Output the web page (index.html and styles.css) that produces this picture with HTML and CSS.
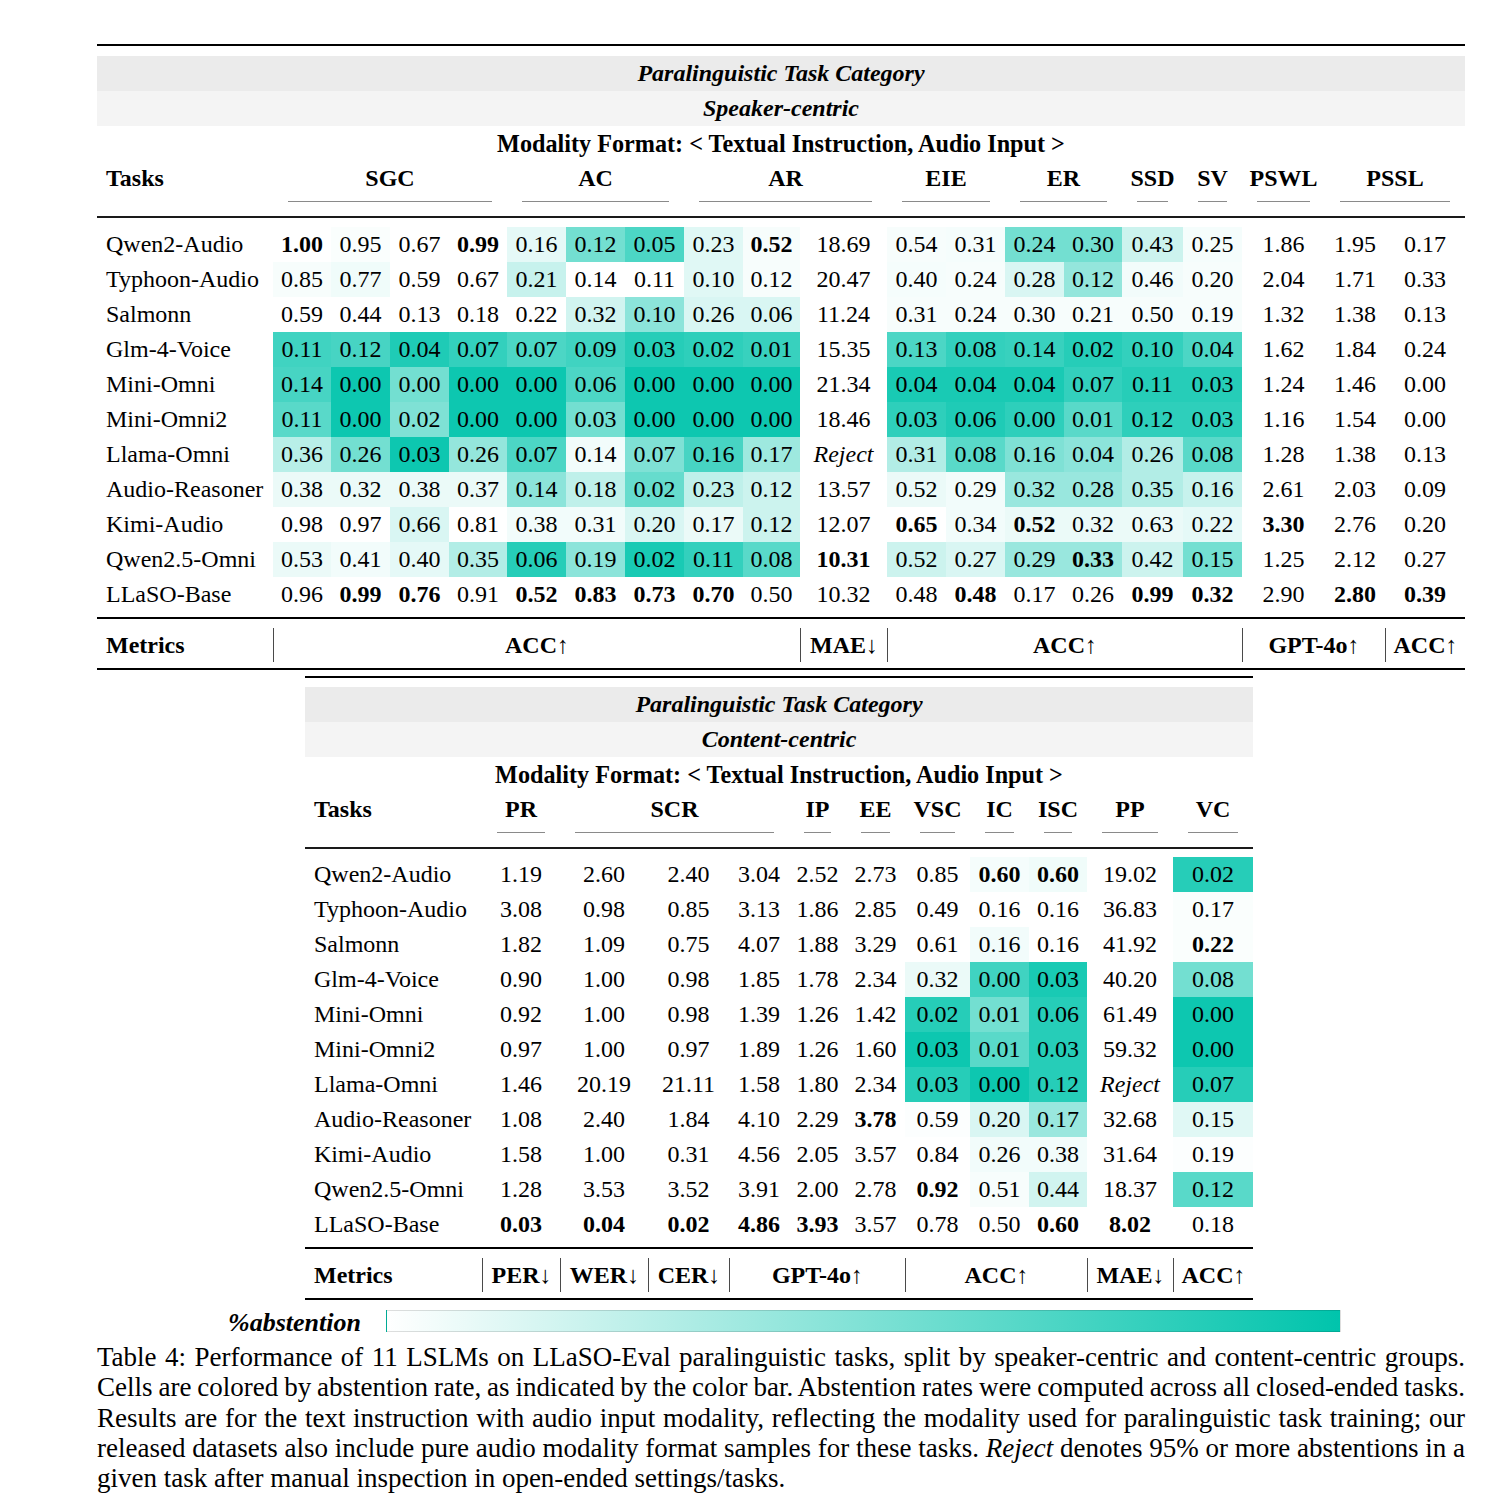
FILE: index.html
```html
<!DOCTYPE html>
<html lang="en">
<head>
<meta charset="utf-8">
<title>Table 4: Paralinguistic tasks</title>
<link rel="stylesheet" href="styles.css">
</head>
<body>
<main class="page">

<section class="tbl t1">
  <div class="band cat">Paralinguistic Task Category</div>
  <div class="band sub">Speaker-centric</div>
  <div class="modality">Modality Format: &lt; Textual Instruction, Audio Input &gt;</div>
  <div class="hdr g1">
    <div class="th">Tasks</div>
    <div class="th grp s4">SGC</div>
    <div class="th grp s3">AC</div>
    <div class="th grp s3">AR</div>
    <div class="th grp s2">EIE</div>
    <div class="th grp s2">ER</div>
    <div class="th grp">SSD</div>
    <div class="th grp">SV</div>
    <div class="th grp">PSWL</div>
    <div class="th grp s2">PSSL</div>
  </div>
  <div class="body">
    <div class="row g1"><span>Qwen2-Audio</span><span class="b">1.00</span><span class="c" style="--p:.02">0.95</span><span>0.67</span><span class="b">0.99</span><span class="c" style="--p:.1">0.16</span><span class="c" style="--p:.55">0.12</span><span class="c" style="--p:.7">0.05</span><span class="c" style="--p:.12">0.23</span><span class="b c" style="--p:.03">0.52</span><span>18.69</span><span class="c" style="--p:.03">0.54</span><span class="c" style="--p:.04">0.31</span><span class="c" style="--p:.55">0.24</span><span class="c" style="--p:.55">0.30</span><span class="c" style="--p:.2">0.43</span><span class="c" style="--p:.04">0.25</span><span>1.86</span><span>1.95</span><span>0.17</span></div>
    <div class="row g1"><span>Typhoon-Audio</span><span class="c" style="--p:.03">0.85</span><span class="c" style="--p:.06">0.77</span><span>0.59</span><span>0.67</span><span class="c" style="--p:.22">0.21</span><span>0.14</span><span>0.11</span><span class="c" style="--p:.12">0.10</span><span class="c" style="--p:.03">0.12</span><span>20.47</span><span class="c" style="--p:.04">0.40</span><span class="c" style="--p:.03">0.24</span><span class="c" style="--p:.15">0.28</span><span class="c" style="--p:.42">0.12</span><span class="c" style="--p:.05">0.46</span><span class="c" style="--p:.03">0.20</span><span>2.04</span><span>1.71</span><span>0.33</span></div>
    <div class="row g1"><span>Salmonn</span><span>0.59</span><span>0.44</span><span>0.13</span><span>0.18</span><span>0.22</span><span class="c" style="--p:.18">0.32</span><span class="c" style="--p:.45">0.10</span><span class="c" style="--p:.15">0.26</span><span class="c" style="--p:.15">0.06</span><span>11.24</span><span class="c" style="--p:.03">0.31</span><span class="c" style="--p:.03">0.24</span><span class="c" style="--p:.03">0.30</span><span class="c" style="--p:.03">0.21</span><span class="c" style="--p:.03">0.50</span><span class="c" style="--p:.03">0.19</span><span>1.32</span><span>1.38</span><span>0.13</span></div>
    <div class="row g1"><span>Glm-4-Voice</span><span class="c" style="--p:.75">0.11</span><span class="c" style="--p:.72">0.12</span><span class="c" style="--p:.88">0.04</span><span class="c" style="--p:.8">0.07</span><span class="c" style="--p:.7">0.07</span><span class="c" style="--p:.75">0.09</span><span class="c" style="--p:.85">0.03</span><span class="c" style="--p:.82">0.02</span><span class="c" style="--p:.78">0.01</span><span>15.35</span><span class="c" style="--p:.7">0.13</span><span class="c" style="--p:.8">0.08</span><span class="c" style="--p:.78">0.14</span><span class="c" style="--p:.85">0.02</span><span class="c" style="--p:.8">0.10</span><span class="c" style="--p:.7">0.04</span><span>1.62</span><span>1.84</span><span>0.24</span></div>
    <div class="row g1"><span>Mini-Omni</span><span class="c" style="--p:.72">0.14</span><span class="c" style="--p:.95">0.00</span><span class="c" style="--p:.55">0.00</span><span class="c" style="--p:.95">0.00</span><span class="c" style="--p:.95">0.00</span><span class="c" style="--p:.7">0.06</span><span class="c" style="--p:.95">0.00</span><span class="c" style="--p:.95">0.00</span><span class="c" style="--p:.95">0.00</span><span>21.34</span><span class="c" style="--p:.9">0.04</span><span class="c" style="--p:.9">0.04</span><span class="c" style="--p:.9">0.04</span><span class="c" style="--p:.8">0.07</span><span class="c" style="--p:.85">0.11</span><span class="c" style="--p:.85">0.03</span><span>1.24</span><span>1.46</span><span>0.00</span></div>
    <div class="row g1"><span>Mini-Omni2</span><span class="c" style="--p:.65">0.11</span><span class="c" style="--p:.95">0.00</span><span class="c" style="--p:.5">0.02</span><span class="c" style="--p:.95">0.00</span><span class="c" style="--p:.95">0.00</span><span class="c" style="--p:.55">0.03</span><span class="c" style="--p:.95">0.00</span><span class="c" style="--p:.95">0.00</span><span class="c" style="--p:.95">0.00</span><span>18.46</span><span class="c" style="--p:.82">0.03</span><span class="c" style="--p:.88">0.06</span><span class="c" style="--p:.82">0.00</span><span class="c" style="--p:.65">0.01</span><span class="c" style="--p:.82">0.12</span><span class="c" style="--p:.82">0.03</span><span>1.16</span><span>1.54</span><span>0.00</span></div>
    <div class="row g1"><span>Llama-Omni</span><span class="c" style="--p:.28">0.36</span><span class="c" style="--p:.55">0.26</span><span class="c" style="--p:.95">0.03</span><span class="c" style="--p:.42">0.26</span><span class="c" style="--p:.7">0.07</span><span class="c" style="--p:.05">0.14</span><span class="c" style="--p:.5">0.07</span><span class="c" style="--p:.72">0.16</span><span class="c" style="--p:.38">0.17</span><span class="it">Reject</span><span class="c" style="--p:.3">0.31</span><span class="c" style="--p:.65">0.08</span><span class="c" style="--p:.5">0.16</span><span class="c" style="--p:.45">0.04</span><span class="c" style="--p:.3">0.26</span><span class="c" style="--p:.65">0.08</span><span>1.28</span><span>1.38</span><span>0.13</span></div>
    <div class="row g1"><span>Audio-Reasoner</span><span class="c" style="--p:.08">0.38</span><span class="c" style="--p:.08">0.32</span><span class="c" style="--p:.08">0.38</span><span class="c" style="--p:.08">0.37</span><span class="c" style="--p:.45">0.14</span><span class="c" style="--p:.25">0.18</span><span class="c" style="--p:.6">0.02</span><span class="c" style="--p:.25">0.23</span><span class="c" style="--p:.2">0.12</span><span>13.57</span><span class="c" style="--p:.08">0.52</span><span class="c" style="--p:.05">0.29</span><span class="c" style="--p:.4">0.32</span><span class="c" style="--p:.4">0.28</span><span class="c" style="--p:.3">0.35</span><span class="c" style="--p:.22">0.16</span><span>2.61</span><span>2.03</span><span>0.09</span></div>
    <div class="row g1"><span>Kimi-Audio</span><span>0.98</span><span>0.97</span><span class="c" style="--p:.15">0.66</span><span>0.81</span><span class="c" style="--p:.05">0.38</span><span class="c" style="--p:.05">0.31</span><span class="c" style="--p:.15">0.20</span><span class="c" style="--p:.08">0.17</span><span class="c" style="--p:.2">0.12</span><span>12.07</span><span class="b">0.65</span><span class="c" style="--p:.05">0.34</span><span class="b c" style="--p:.08">0.52</span><span class="c" style="--p:.08">0.32</span><span class="c" style="--p:.08">0.63</span><span class="c" style="--p:.1">0.22</span><span class="b">3.30</span><span>2.76</span><span>0.20</span></div>
    <div class="row g1"><span>Qwen2.5-Omni</span><span class="c" style="--p:.08">0.53</span><span class="c" style="--p:.05">0.41</span><span class="c" style="--p:.1">0.40</span><span class="c" style="--p:.3">0.35</span><span class="c" style="--p:.85">0.06</span><span class="c" style="--p:.45">0.19</span><span class="c" style="--p:.9">0.02</span><span class="c" style="--p:.8">0.11</span><span class="c" style="--p:.65">0.08</span><span class="b">10.31</span><span class="c" style="--p:.2">0.52</span><span class="c" style="--p:.15">0.27</span><span class="c" style="--p:.4">0.29</span><span class="b c" style="--p:.4">0.33</span><span class="c" style="--p:.2">0.42</span><span class="c" style="--p:.55">0.15</span><span>1.25</span><span>2.12</span><span>0.27</span></div>
    <div class="row g1"><span>LLaSO-Base</span><span>0.96</span><span class="b">0.99</span><span class="b">0.76</span><span>0.91</span><span class="b">0.52</span><span class="b">0.83</span><span class="b">0.73</span><span class="b">0.70</span><span>0.50</span><span>10.32</span><span>0.48</span><span class="b">0.48</span><span>0.17</span><span>0.26</span><span class="b">0.99</span><span class="b">0.32</span><span>2.90</span><span class="b">2.80</span><span class="b">0.39</span></div>
  </div>
  <div class="metrics g1">
    <div class="m">Metrics</div>
    <div class="m s9">ACC↑</div>
    <div class="m">MAE↓</div>
    <div class="m s6">ACC↑</div>
    <div class="m s2">GPT-4o↑</div>
    <div class="m">ACC↑</div>
  </div>
</section>

<section class="tbl t2">
  <div class="band cat">Paralinguistic Task Category</div>
  <div class="band sub">Content-centric</div>
  <div class="modality">Modality Format: &lt; Textual Instruction, Audio Input &gt;</div>
  <div class="hdr g2">
    <div class="th">Tasks</div>
    <div class="th grp">PR</div>
    <div class="th grp s3">SCR</div>
    <div class="th grp">IP</div>
    <div class="th grp">EE</div>
    <div class="th grp">VSC</div>
    <div class="th grp">IC</div>
    <div class="th grp">ISC</div>
    <div class="th grp">PP</div>
    <div class="th grp">VC</div>
  </div>
  <div class="body">
    <div class="row g2"><span>Qwen2-Audio</span><span>1.19</span><span>2.60</span><span>2.40</span><span>3.04</span><span>2.52</span><span>2.73</span><span>0.85</span><span class="b c" style="--p:.04">0.60</span><span class="b c" style="--p:.06">0.60</span><span>19.02</span><span class="c" style="--p:.85">0.02</span></div>
    <div class="row g2"><span>Typhoon-Audio</span><span>3.08</span><span>0.98</span><span>0.85</span><span>3.13</span><span>1.86</span><span>2.85</span><span>0.49</span><span>0.16</span><span>0.16</span><span>36.83</span><span class="c" style="--p:.02">0.17</span></div>
    <div class="row g2"><span>Salmonn</span><span>1.82</span><span>1.09</span><span>0.75</span><span>4.07</span><span>1.88</span><span>3.29</span><span>0.61</span><span class="c" style="--p:.05">0.16</span><span>0.16</span><span>41.92</span><span class="b c" style="--p:.02">0.22</span></div>
    <div class="row g2"><span>Glm-4-Voice</span><span>0.90</span><span>1.00</span><span>0.98</span><span>1.85</span><span>1.78</span><span>2.34</span><span class="c" style="--p:.08">0.32</span><span class="c" style="--p:.75">0.00</span><span class="c" style="--p:.9">0.03</span><span>40.20</span><span class="c" style="--p:.55">0.08</span></div>
    <div class="row g2"><span>Mini-Omni</span><span>0.92</span><span>1.00</span><span>0.98</span><span>1.39</span><span>1.26</span><span>1.42</span><span class="c" style="--p:.85">0.02</span><span class="c" style="--p:.55">0.01</span><span class="c" style="--p:.85">0.06</span><span>61.49</span><span class="c" style="--p:.95">0.00</span></div>
    <div class="row g2"><span>Mini-Omni2</span><span>0.97</span><span>1.00</span><span>0.97</span><span>1.89</span><span>1.26</span><span>1.60</span><span class="c" style="--p:.95">0.03</span><span class="c" style="--p:.65">0.01</span><span class="c" style="--p:.85">0.03</span><span>59.32</span><span class="c" style="--p:.95">0.00</span></div>
    <div class="row g2"><span>Llama-Omni</span><span>1.46</span><span>20.19</span><span>21.11</span><span>1.58</span><span>1.80</span><span>2.34</span><span class="c" style="--p:.85">0.03</span><span class="c" style="--p:.95">0.00</span><span class="c" style="--p:.85">0.12</span><span class="it">Reject</span><span class="c" style="--p:.85">0.07</span></div>
    <div class="row g2"><span>Audio-Reasoner</span><span>1.08</span><span>2.40</span><span>1.84</span><span>4.10</span><span>2.29</span><span class="b">3.78</span><span class="c" style="--p:.01">0.59</span><span class="c" style="--p:.15">0.20</span><span class="c" style="--p:.4">0.17</span><span>32.68</span><span class="c" style="--p:.12">0.15</span></div>
    <div class="row g2"><span>Kimi-Audio</span><span>1.58</span><span>1.00</span><span>0.31</span><span>4.56</span><span>2.05</span><span>3.57</span><span>0.84</span><span class="c" style="--p:.05">0.26</span><span class="c" style="--p:.05">0.38</span><span>31.64</span><span class="c" style="--p:.01">0.19</span></div>
    <div class="row g2"><span>Qwen2.5-Omni</span><span>1.28</span><span>3.53</span><span>3.52</span><span>3.91</span><span>2.00</span><span>2.78</span><span class="b">0.92</span><span class="c" style="--p:.03">0.51</span><span class="c" style="--p:.18">0.44</span><span>18.37</span><span class="c" style="--p:.65">0.12</span></div>
    <div class="row g2"><span>LLaSO-Base</span><span class="b">0.03</span><span class="b">0.04</span><span class="b">0.02</span><span class="b">4.86</span><span class="b">3.93</span><span>3.57</span><span>0.78</span><span>0.50</span><span class="b">0.60</span><span class="b">8.02</span><span>0.18</span></div>
  </div>
  <div class="metrics g2">
    <div class="m">Metrics</div>
    <div class="m">PER↓</div>
    <div class="m">WER↓</div>
    <div class="m">CER↓</div>
    <div class="m s3">GPT-4o↑</div>
    <div class="m s3">ACC↑</div>
    <div class="m">MAE↓</div>
    <div class="m">ACC↑</div>
  </div>
</section>

<div class="legend">
  <span class="legend-label">%abstention</span>
  <span class="legend-bar"></span>
</div>

<figcaption class="caption">
  <div class="ln">Table 4: Performance of 11 LSLMs on LLaSO-Eval paralinguistic tasks, split by speaker-centric and content-centric groups.</div>
  <div class="ln">Cells are colored by abstention rate, as indicated by the color bar. Abstention rates were computed across all closed-ended tasks.</div>
  <div class="ln">Results are for the text instruction with audio input modality, reflecting the modality used for paralinguistic task training; our</div>
  <div class="ln">released datasets also include pure audio modality format samples for these tasks. <i>Reject</i> denotes 95% or more abstentions in a</div>
  <div class="ln last">given task after manual inspection in open-ended settings/tasks.</div>
</figcaption>

</main>
</body>
</html>
```

FILE: styles.css
```css
html, body {
  margin: 0;
  padding: 0;
  background: #ffffff;
}

body {
  font-family: "Liberation Serif", "Times New Roman", serif;
  color: #000000;
}

.page {
  padding-top: 44px;
}

.tbl {
  font-size: 24px;
  border-top: 2px solid #000000;
  border-bottom: 2px solid #000000;
  padding-top: 10px;
}

.t1 {
  width: 1368px;
  margin-left: 97px;
}

.t2 {
  width: 948px;
  margin-left: 305px;
  margin-top: 6px;
  padding-top: 9px;
}

.band {
  height: 35px;
  line-height: 35px;
  text-align: center;
  font-weight: bold;
  font-style: italic;
}

.cat {
  background: #ebebeb;
}

.sub {
  background: #f4f4f4;
}

.modality {
  height: 35px;
  line-height: 35px;
  text-align: center;
  font-weight: bold;
  font-size: 24.2px;
}

.g1 {
  display: grid;
  grid-template-columns: 176px 58px 59px 59px 58px 59px 59px 59px 59px 57px 87px 59px 59px 59px 58px 61px 59px 83px 60px 80px;
}

.g2 {
  display: grid;
  grid-template-columns: 177px 78px 88px 81px 60px 57px 59px 65px 59px 58px 86px 80px;
}

.s2 { grid-column: span 2; }
.s3 { grid-column: span 3; }
.s4 { grid-column: span 4; }
.s6 { grid-column: span 6; }
.s9 { grid-column: span 9; }

.hdr {
  padding-bottom: 14px;
  border-bottom: 2px solid #1a1a1a;
}

.th {
  font-weight: bold;
  line-height: 35px;
  text-align: center;
  display: flex;
  flex-direction: column;
}

.th:first-child {
  text-align: left;
  padding-left: 9px;
}

.th.grp::after {
  content: "";
  display: block;
  height: 1px;
  margin: 5px 15px 0;
  background: #8a8a8a;
}

.body {
  padding: 9px 0 5px;
}

.t2 .body {
  padding-top: 8px;
}

.row {
  height: 35px;
  line-height: 35px;
  text-align: center;
  white-space: nowrap;
}

.row > span:first-child {
  text-align: left;
  padding-left: 9px;
}

.c {
  background: rgba(0, 196, 172, var(--p));
}

.b {
  font-weight: bold;
}

.it {
  font-style: italic;
}

.metrics {
  border-top: 2px solid #000000;
  padding: 9px 0 6px;
}

.m {
  height: 34px;
  line-height: 34px;
  font-weight: bold;
  text-align: center;
  border-left: 1px solid #4a4a4a;
  white-space: nowrap;
}

.m:first-child {
  border-left: none;
  text-align: left;
  padding-left: 9px;
}

.legend {
  display: flex;
  align-items: flex-start;
  margin-top: 10px;
  padding-left: 228px;
  height: 26px;
}

.legend-label {
  font-size: 26px;
  line-height: 26px;
  font-weight: bold;
  font-style: italic;
}

.legend-bar {
  margin-left: 25px;
  width: 955px;
  height: 22px;
  box-sizing: border-box;
  border: 1px solid rgba(0, 0, 0, 0.13);
  background: linear-gradient(to right, #ffffff, rgb(0, 196, 172));
}

.caption {
  display: block;
  margin: 6px 0 0 97px;
  width: 1368px;
  font-size: 27px;
  line-height: 30.25px;
}

.ln {
  text-align: justify;
  text-align-last: justify;
  word-spacing: -3px;
}

.ln.last {
  text-align-last: left;
  word-spacing: 0;
}
```
